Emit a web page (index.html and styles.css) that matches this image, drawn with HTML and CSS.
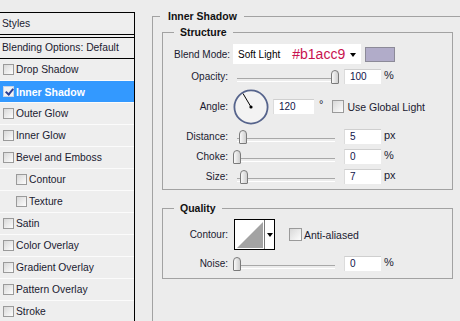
FILE: index.html
```html
<!DOCTYPE html>
<html lang="en">

<head>
    <meta charset="UTF-8">
    <meta name="viewport" content="width=device-width, initial-scale=1.0">
    <title>Layer Style - Inner Shadow</title>
    <link rel="stylesheet" href="styles.css">
</head>

<body>
<div class="dialog">
    <!-- Left list of effects -->
    <aside class="styles-panel">
        <div class="panel-head">Styles</div>
        <div class="blend-opts">Blending Options: Default</div>
        <ul class="effects">
            <li><span class="check"></span>Drop Shadow</li>
            <li class="active"><span class="check checked"></span>Inner Shadow</li>
            <li><span class="check"></span>Outer Glow</li>
            <li><span class="check"></span>Inner Glow</li>
            <li><span class="check"></span>Bevel and Emboss</li>
            <li class="sub"><span class="check"></span>Contour</li>
            <li class="sub"><span class="check"></span>Texture</li>
            <li><span class="check"></span>Satin</li>
            <li><span class="check"></span>Color Overlay</li>
            <li><span class="check"></span>Gradient Overlay</li>
            <li><span class="check"></span>Pattern Overlay</li>
            <li><span class="check"></span>Stroke</li>
        </ul>
    </aside>

    <!-- Settings for the selected effect -->
    <main class="settings">
        <fieldset class="group outer">
            <legend>Inner Shadow</legend>

            <fieldset class="group structure">
                <legend>Structure</legend>

                <div class="row row-blend">
                    <span class="lbl">Blend Mode:</span>
                    <div class="select">
                        <span>Soft Light</span>
                        <span class="hex">#b1acc9</span>
                        <span class="arrow"></span>
                    </div>
                    <span class="swatch"></span>
                </div>

                <div class="row">
                    <span class="lbl">Opacity:</span>
                    <div class="slider"><span class="thumb" style="--pos: 1"></span></div>
                    <span class="num">100</span>
                    <span class="unit">%</span>
                </div>

                <div class="row row-angle">
                    <span class="lbl">Angle:</span>
                    <svg class="dial" width="36" height="36" viewBox="0 0 36 36">
                        <circle cx="18" cy="18" r="16.6" fill="#f3f3f3" stroke="#56648c" stroke-width="1.8"/>
                        <line x1="18" y1="18" x2="10" y2="4.5" stroke="#000" stroke-width="1"/>
                        <circle cx="18" cy="18" r="1.6" fill="#000"/>
                    </svg>
                    <span class="num num-angle">120</span>
                    <span class="unit deg">°</span>
                    <span class="check box-global"></span>
                    <span class="opt">Use Global Light</span>
                </div>

                <div class="row">
                    <span class="lbl">Distance:</span>
                    <div class="slider"><span class="thumb" style="--pos: 0.061"></span></div>
                    <span class="num">5</span>
                    <span class="unit">px</span>
                </div>

                <div class="row">
                    <span class="lbl">Choke:</span>
                    <div class="slider"><span class="thumb" style="--pos: 0"></span></div>
                    <span class="num">0</span>
                    <span class="unit">%</span>
                </div>

                <div class="row">
                    <span class="lbl">Size:</span>
                    <div class="slider"><span class="thumb" style="--pos: 0.075"></span></div>
                    <span class="num">7</span>
                    <span class="unit">px</span>
                </div>
            </fieldset>

            <fieldset class="group quality">
                <legend>Quality</legend>

                <div class="row row-contour">
                    <span class="lbl">Contour:</span>
                    <div class="contour">
                        <svg width="29" height="29" viewBox="0 0 29 29">
                            <rect width="29" height="29" fill="#fff"/>
                            <polygon points="2,28 28,2 28,28" fill="#a3a3a3"/>
                        </svg>
                        <span class="contour-drop"><span class="arrow"></span></span>
                    </div>
                    <span class="check box-aa"></span>
                    <span class="opt">Anti-aliased</span>
                </div>

                <div class="row row-noise">
                    <span class="lbl">Noise:</span>
                    <div class="slider"><span class="thumb" style="--pos: 0"></span></div>
                    <span class="num">0</span>
                    <span class="unit">%</span>
                </div>
            </fieldset>
        </fieldset>
    </main>
</div>
</body>

</html>
```

FILE: styles.css
```css
* {
    box-sizing: border-box;
    margin: 0;
    padding: 0;
}

body {
    font-family: "Liberation Sans", Arial, sans-serif;
    font-size: 10px;
    color: #1a1a30;
    background-color: #ececec;
    overflow: hidden;
}

.dialog {
    display: flex;
    height: 321px;
}

/* ---- left list ---- */
.styles-panel {
    width: 135px;
    flex-shrink: 0;
    margin-top: 12px;
    border-top: 1px solid #000;
    border-right: 1px solid #000;
    background-color: #eeeeee;
    font-size: 10.3px;
}

.panel-head {
    height: 22px;
    padding-left: 2px;
    line-height: 21px;
    border-bottom: 1px solid #000;
}

.blend-opts {
    height: 22px;
    margin-top: 2px;
    padding-left: 2px;
    line-height: 20px;
    border-top: 1px solid #000;
    border-bottom: 1px solid #000;
}

.effects {
    list-style: none;
}

.effects li {
    display: flex;
    align-items: center;
    height: 22px;
    padding-left: 3px;
    border-bottom: 1px solid #fbfbfb;
}

.effects li.sub {
    padding-left: 16px;
}

.effects li.active {
    background-color: #3399ff;
    color: #fff;
    font-weight: bold;
    font-size: 10.5px;
}

.check {
    position: relative;
    display: inline-block;
    width: 11px;
    height: 11px;
    margin-right: 2px;
    border: 1px solid #9a9a9a;
    background: linear-gradient(135deg, #d8d8d8, #fdfdfd);
}

.check.checked {
    border-color: #c8d4e8;
    background: #f4f4f4;
}

.check.checked::after {
    content: "";
    position: absolute;
    left: 3px;
    top: 0;
    width: 3px;
    height: 6px;
    border-right: 2px solid #2b3f95;
    border-bottom: 2px solid #2b3f95;
    transform: rotate(40deg);
}

/* ---- right side ---- */
.settings {
    flex: 1;
    padding: 10px 0 0 17px;
}

.group {
    border: 1px solid #a2a2a2;
}

.group legend {
    font-weight: bold;
    font-size: 10.5px;
    line-height: 13px;
    color: #111;
    padding: 0 6px;
}

.outer {
    height: 100%;
    padding: 3px 7px 0 9px;
    border-right: 0;
    border-bottom: 0;
}

.outer > legend {
    margin-left: -2px;
    padding: 0 7px 0 8px;
}

.structure {
    padding: 5px 0 5px 11px;
}

.quality {
    margin-top: 12px;
    padding: 4px 0 7px 11px;
}

.row {
    display: flex;
    align-items: center;
    height: 15px;
    margin-top: 5px;
}

.row-blend {
    height: 20px;
    margin-top: 0;
}

.row-angle {
    height: 35px;
}

.row-contour {
    height: 31px;
    margin-top: 0;
}

.row-noise {
    margin-top: 6px;
}

.lbl {
    width: 54px;
    margin-right: 5px;
    text-align: right;
    white-space: nowrap;
}

.select {
    display: flex;
    align-items: center;
    width: 128px;
    height: 20px;
    padding-left: 5px;
    background-color: #fff;
    color: #000;
}

.hex {
    margin-left: 12px;
    font-size: 14px;
    color: #c8124f;
}

.arrow {
    display: inline-block;
    width: 0;
    height: 0;
    margin-left: 5px;
    margin-top: 1px;
    border-left: 3.5px solid transparent;
    border-right: 3.5px solid transparent;
    border-top: 4px solid #000;
}

.swatch {
    width: 30px;
    height: 15px;
    margin-left: 4px;
    background-color: #b1acc9;
    border: 1px solid #8c8a98;
}

.slider {
    position: relative;
    width: 106px;
    height: 15px;
    margin-right: 5px;
}

.slider::before {
    content: "";
    position: absolute;
    left: 4px;
    right: 4px;
    top: 9px;
    height: 2px;
    border-top: 1px solid #a8a8a8;
    border-bottom: 1px solid #fff;
}

.thumb {
    position: absolute;
    top: 1px;
    left: calc((100% - 8px) * var(--pos));
    width: 8px;
    height: 14px;
    border: 1px solid #7a7a7a;
    border-radius: 4px 4px 1px 1px;
    background: linear-gradient(90deg, #f8f8f8, #cfcfcf);
}

.num {
    width: 37px;
    height: 15px;
    padding-left: 5px;
    line-height: 14px;
    background-color: #fff;
    border-top: 1px solid #cfcfcf;
    border-left: 1px solid #dcdcdc;
    color: #10144a;
}

.unit {
    margin-left: 3px;
    margin-top: -3px;
    font-size: 11px;
}

.dial {
    flex-shrink: 0;
}

.num-angle {
    width: 41px;
    margin-left: 4px;
}

.deg {
    margin-left: 5px;
    margin-top: -6px;
}

.box-global {
    width: 12px;
    height: 13px;
    margin-left: 9px;
    margin-right: 3px;
}

.opt {
    font-size: 10.5px;
    white-space: nowrap;
}

.contour {
    display: flex;
    width: 41px;
    height: 31px;
    margin-left: 1px;
    border: 1px solid #000;
    background-color: #fff;
}

.contour svg {
    display: block;
}

.contour-drop {
    display: flex;
    align-items: center;
    justify-content: center;
    width: 10px;
    border-left: 1px solid #777;
}

.contour-drop .arrow {
    margin: 0;
}

.box-aa {
    width: 13px;
    height: 13px;
    margin-left: 14px;
}
```
